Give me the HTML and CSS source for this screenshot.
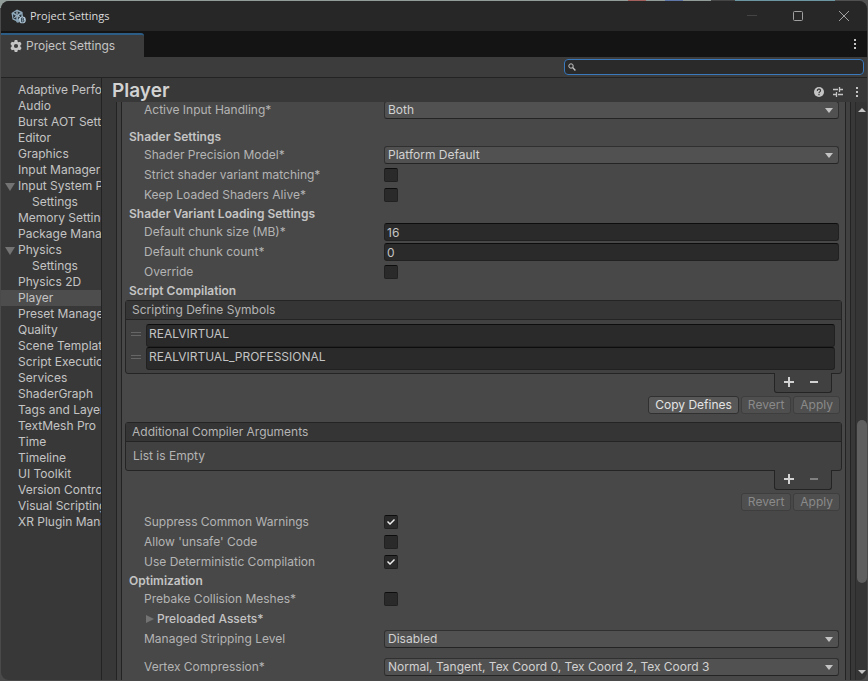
FILE: index.html
```html
<!DOCTYPE html>
<html lang="en">
<head>
    <meta charset="UTF-8">
    <meta name="viewport" content="width=device-width, initial-scale=1.0">
    <title>Project Settings</title>
    <link rel="stylesheet" href="styles.css">
</head>
<body>
    <div class="window">
        <header class="titlebar">
            <svg class="app-icon" width="15" height="15" viewBox="0 0 15 15">
                <path d="M6 0.5 L11.5 3 L12 8 L7 13 L1.5 10.5 L0.5 4 Z" fill="#8fa9bb"/>
                <path d="M6 2 L9.5 3.7 L6.2 5.5 L2.8 3.8 Z M2 5.2 L5.3 7 V10.8 L2.4 9.2 Z M7.2 7 L10.4 5.2 V8 L7.2 10.6 Z" fill="#26333d"/>
                <path d="M6 2.2 V5 M3.4 8.6 L5.4 7.3 M8.6 7.6 L7 6.8" stroke="#dce8f0" stroke-width="1"/>
                <circle cx="11.4" cy="10.9" r="3.4" fill="#b5cbd9"/>
                <path d="M10.4 9 h1.6 a1 1 0 0 1 0 1.9 h-1.6 M12 10.9 a1 1 0 0 1 0 2 h-1.6 V9" fill="none" stroke="#31424f" stroke-width="1"/>
                <circle cx="6.8" cy="12" r="1.7" fill="#88a2b4"/>
            </svg>
            <h1 class="window-title">Project Settings</h1>
            <div class="window-buttons">
                <button aria-label="Minimize"><svg width="12" height="12" viewBox="0 0 12 12"><path d="M1 5.5 H11" stroke="#444"/></svg></button>
                <button aria-label="Maximize"><svg width="12" height="12" viewBox="0 0 12 12"><rect x="1.5" y="1.5" width="9" height="9" rx="1" fill="none" stroke="#a0a0a0"/></svg></button>
                <button aria-label="Close"><svg width="12" height="12" viewBox="0 0 12 12"><path d="M1 1 L11 11 M11 1 L1 11" stroke="#a0a0a0"/></svg></button>
            </div>
        </header>

        <div class="dock">
            <button class="tab">
                <svg width="12" height="12" viewBox="0 0 12 12">
                    <path fill="#c4c4c4" fill-rule="evenodd" d="M4.7 0 H7.3 L7.7 1.7 L8.6 2.2 L10.2 1.7 L11.6 4 L10.4 5.2 V6.8 L11.6 8 L10.2 10.3 L8.6 9.8 L7.7 10.3 L7.3 12 H4.7 L4.3 10.3 L3.4 9.8 L1.8 10.3 L0.4 8 L1.6 6.8 V5.2 L0.4 4 L1.8 1.7 L3.4 2.2 L4.3 1.7 Z M6 3.9 A2.1 2.1 0 1 0 6 8.1 A2.1 2.1 0 1 0 6 3.9 Z"/>
                </svg>
                Project Settings
            </button>
            <button class="icon-button" aria-label="Tab menu"><svg width="4" height="12" viewBox="0 0 4 12"><path fill="#c4c4c4" d="M1 1h2v2H1z M1 5h2v2H1z M1 9h2v2H1z"/></svg></button>
        </div>

        <div class="toolbar">
            <label class="search">
                <svg width="8" height="8" viewBox="0 0 8 8"><circle cx="3" cy="3" r="2.2" fill="none" stroke="#c4c4c4"/><path d="M4.6 4.6 L7.4 7.4" stroke="#c4c4c4" stroke-width="1.4"/></svg>
                <input type="text" aria-label="Search settings">
            </label>
        </div>

        <div class="main">
            <nav class="sidebar">
                <a href="#">Adaptive Performance</a>
                <a href="#">Audio</a>
                <a href="#">Burst AOT Settings</a>
                <a href="#">Editor</a>
                <a href="#">Graphics</a>
                <a href="#">Input Manager</a>
                <a href="#" class="open">Input System Package</a>
                <a href="#" class="child">Settings</a>
                <a href="#">Memory Settings</a>
                <a href="#">Package Manager</a>
                <a href="#" class="open">Physics</a>
                <a href="#" class="child">Settings</a>
                <a href="#">Physics 2D</a>
                <a href="#" class="selected">Player</a>
                <a href="#">Preset Manager</a>
                <a href="#">Quality</a>
                <a href="#">Scene Template</a>
                <a href="#">Script Execution Order</a>
                <a href="#">Services</a>
                <a href="#">ShaderGraph</a>
                <a href="#">Tags and Layers</a>
                <a href="#">TextMesh Pro</a>
                <a href="#">Time</a>
                <a href="#">Timeline</a>
                <a href="#">UI Toolkit</a>
                <a href="#">Version Control</a>
                <a href="#">Visual Scripting</a>
                <a href="#">XR Plugin Management</a>
            </nav>

            <section class="content">
                <div class="content-header">
                    <h2>Player</h2>
                    <button class="icon-button" aria-label="Help"><svg width="10" height="10" viewBox="0 0 10 10"><circle cx="5" cy="5" r="5" fill="#c4c4c4"/><path d="M3.4 4 A1.6 1.5 0 1 1 5.6 5 Q5 5.3 5 6.2" fill="none" stroke="#383838" stroke-width="1.2"/><path d="M4.4 7h1.2v1.2H4.4z" fill="#383838"/></svg></button>
                    <button class="icon-button" aria-label="Presets"><svg width="10" height="10" viewBox="0 0 10 10"><path d="M0 2.5 H5 M7 2.5 H10 M6.5 0 V5 M0 7.5 H3 M5 7.5 H10 M3.5 5 V10" stroke="#c4c4c4" stroke-width="1.3"/></svg></button>
                    <button class="icon-button" aria-label="More"><svg width="4" height="12" viewBox="0 0 4 12"><path fill="#c4c4c4" d="M1 1h2v2H1z M1 5h2v2H1z M1 9h2v2H1z"/></svg></button>
                </div>

                <div class="scroll-area">
                    <div class="frame">
                        <div class="panel">
                            <div class="row">
                                <label for="input_handling">Active Input Handling*</label>
                                <div class="dropdown"><select id="input_handling"><option>Both</option></select></div>
                            </div>

                            <h3 class="spaced">Shader Settings</h3>
                            <div class="row">
                                <label for="shader_precision">Shader Precision Model*</label>
                                <div class="dropdown"><select id="shader_precision"><option>Platform Default</option></select></div>
                            </div>
                            <div class="row">
                                <label for="strict_variant">Strict shader variant matching*</label>
                                <input type="checkbox" id="strict_variant">
                            </div>
                            <div class="row">
                                <label for="keep_shaders">Keep Loaded Shaders Alive*</label>
                                <input type="checkbox" id="keep_shaders">
                            </div>

                            <h3>Shader Variant Loading Settings</h3>
                            <div class="row">
                                <label for="chunk_size">Default chunk size (MB)*</label>
                                <input type="text" id="chunk_size" value="16">
                            </div>
                            <div class="row">
                                <label for="chunk_count">Default chunk count*</label>
                                <input type="text" id="chunk_count" value="0">
                            </div>
                            <div class="row">
                                <label for="override">Override</label>
                                <input type="checkbox" id="override">
                            </div>

                            <h3>Script Compilation</h3>
                            <div class="list">
                                <div class="list-header">Scripting Define Symbols</div>
                                <div class="list-body">
                                    <div class="list-item"><span class="handle"></span><input type="text" aria-label="Symbol 1" value="REALVIRTUAL"></div>
                                    <div class="list-item"><span class="handle"></span><input type="text" aria-label="Symbol 2" value="REALVIRTUAL_PROFESSIONAL"></div>
                                </div>
                            </div>
                            <div class="list-footer">
                                <button aria-label="Add symbol"><svg width="10" height="10" viewBox="0 0 10 10"><path d="M0 5 H10 M5 0 V10" stroke="#d2d2d2" stroke-width="2"/></svg></button>
                                <button aria-label="Remove symbol"><svg width="10" height="10" viewBox="0 0 10 10"><path d="M1 5 H9" stroke="#d2d2d2" stroke-width="2"/></svg></button>
                            </div>
                            <div class="actions">
                                <button>Copy Defines</button>
                                <button disabled>Revert</button>
                                <button disabled>Apply</button>
                            </div>

                            <div class="list second">
                                <div class="list-header">Additional Compiler Arguments</div>
                                <div class="list-empty">List is Empty</div>
                            </div>
                            <div class="list-footer">
                                <button aria-label="Add argument"><svg width="10" height="10" viewBox="0 0 10 10"><path d="M0 5 H10 M5 0 V10" stroke="#d2d2d2" stroke-width="2"/></svg></button>
                                <button aria-label="Remove argument" disabled><svg width="10" height="10" viewBox="0 0 10 10"><path d="M1 5 H9" stroke="#808080" stroke-width="2"/></svg></button>
                            </div>
                            <div class="actions">
                                <button disabled>Revert</button>
                                <button disabled>Apply</button>
                            </div>

                            <div class="row">
                                <label for="suppress_warnings">Suppress Common Warnings</label>
                                <input type="checkbox" id="suppress_warnings" checked>
                            </div>
                            <div class="row">
                                <label for="unsafe_code">Allow 'unsafe' Code</label>
                                <input type="checkbox" id="unsafe_code">
                            </div>
                            <div class="row">
                                <label for="deterministic">Use Deterministic Compilation</label>
                                <input type="checkbox" id="deterministic" checked>
                            </div>

                            <h3>Optimization</h3>
                            <div class="row">
                                <label for="prebake">Prebake Collision Meshes*</label>
                                <input type="checkbox" id="prebake">
                            </div>
                            <div class="row">
                                <button class="foldout">Preloaded Assets*</button>
                            </div>
                            <div class="row">
                                <label for="stripping">Managed Stripping Level</label>
                                <div class="dropdown"><select id="stripping"><option>Disabled</option></select></div>
                            </div>
                            <div class="row spaced">
                                <label for="vertex">Vertex Compression*</label>
                                <div class="dropdown"><select id="vertex"><option>Normal, Tangent, Tex Coord 0, Tex Coord 2, Tex Coord 3</option></select></div>
                            </div>
                        </div>
                    </div>

                    <div class="scrollbar">
                        <span class="arrow-up"></span>
                        <span class="track-before"></span>
                        <span class="thumb"></span>
                        <span class="track-after"></span>
                        <span class="arrow-down"></span>
                    </div>
                </div>
            </section>
        </div>
    </div>
</body>
</html>
```
FILE: styles.css
```css
* { box-sizing: border-box; }
body { margin: 0; height: 100vh; padding: 1px; overflow: hidden; background: linear-gradient(90deg, #929d99 628px, #a3605c 628px 646px, #929d99 646px 665px, #5f76a8 665px 683px, #929d99 683px 711px, #454545 711px 735px, #6d96a3 735px 835px, #505050 835px) top / 100% 8px no-repeat #4a4a4a; font-family: Inter, sans-serif; font-size: 12px; line-height: 16px; color: #c4c4c4; }
button, input, select { font: inherit; color: inherit; margin: 0; }
button { padding: 0; border: none; background: none; }
a { color: inherit; text-decoration: none; }
svg { display: block; }

.window { height: 100%; display: flex; flex-direction: column; overflow: hidden; border-radius: 8px; background: #383838; }

.titlebar { height: 30px; flex: none; display: flex; align-items: center; padding-left: 10px; background: #272727; }
.window-title { flex: 1; margin: 0 0 0 4px; font-family: "Open Sans", "Noto Sans", sans-serif; font-size: 11px; font-weight: 400; color: #dcdcdc; }
.window-buttons { display: flex; }
.window-buttons button { width: 46px; height: 28px; display: flex; align-items: center; justify-content: center; }

.dock { height: 26px; flex: none; display: flex; align-items: flex-end; justify-content: space-between; padding-right: 4px; background: #141414; }
.tab { height: 24px; display: flex; align-items: center; gap: 4px; padding: 0 29px 0 9px; border-top: 2px solid #2c5d87; border-radius: 0 3px 0 0; background: #3c3c3c; }
.icon-button { width: 16px; display: flex; justify-content: center; }
.dock .icon-button { align-self: center; }

.toolbar { height: 21px; flex: none; display: flex; justify-content: flex-end; padding: 2px 3px; border-bottom: 1px solid #232323; background: #3c3c3c; }
.search { width: 300px; height: 16px; display: flex; align-items: center; padding-left: 4px; border-radius: 4px; background: #2a2a2a; outline: 1px solid #3a79bb; outline-offset: -1px; }
.search input { flex: 1; min-width: 0; height: 14px; border: none; outline: none; background: none; }

.main { flex: 1; min-height: 0; display: flex; }
.sidebar { width: 101px; flex: none; padding-top: 4px; overflow: hidden; border-right: 1px solid #232323; }
.sidebar a { display: block; position: relative; height: 16px; line-height: 16px; padding-left: 17px; white-space: nowrap; overflow: hidden; }
.sidebar .child { padding-left: 31px; }
.sidebar .selected { background: #4d4d4d; }
.sidebar .open::before { content: ""; position: absolute; left: 4px; top: 5px; border: solid transparent; border-width: 8px 5px 0; border-top-color: #737373; }

.content { flex: 1; min-width: 0; display: flex; flex-direction: column; }
.content-header { height: 24px; flex: none; display: flex; align-items: center; gap: 3px; padding: 3px 2px 0 10px; }
.content-header h2 { flex: 1; margin: 0; font-size: 19px; font-weight: 600; line-height: 20px; padding-bottom: 2px; color: #d2d2d2; }

.scroll-area { flex: 1; min-height: 0; display: flex; }
.frame { flex: 1; min-width: 0; margin: 0 4px 0 14px; padding: 0 4px; overflow: hidden; border: solid #232323; border-width: 0 1px; background: #414141; }
.panel { height: 100%; min-height: 578px; padding: 0 3px; overflow: hidden; border: solid #232323; border-width: 0 1px; background: #484848; }
.panel > :first-child { margin-top: -2px; }

.row { height: 20px; display: grid; grid-template-columns: 240px 1fr; align-items: center; padding: 0 3px 0 19px; }
.spaced { margin-top: 8px; }
.panel h3 { height: 17px; margin: 0 4px; font-size: 12px; font-weight: 600; line-height: 17px; }
.panel h3.spaced { margin-top: 8px; }
.row label { color: #b4b4b4; }

input[type="text"] { min-width: 0; outline: none; }
.row input[type="text"], .list-item input { width: 100%; height: 18px; padding: 0 2px; border: 1px solid #212121; border-top-color: #0d0d0d; border-radius: 3px; background: #2a2a2a; }
input[type="checkbox"] { appearance: none; width: 14px; height: 14px; border: 1px solid #212121; border-top-color: #0d0d0d; border-radius: 2px; background: #2a2a2a; }
input[type="checkbox"]:checked::after { content: ""; display: block; width: 12px; height: 12px; background: #eee; clip-path: polygon(2px 6px, 3px 5px, 5px 7px, 9px 3px, 10px 4px, 5px 9px); }

.dropdown { position: relative; }
.dropdown select { appearance: none; display: block; width: 100%; height: 18px; padding: 0 20px 0 3px; line-height: 16px; border: 1px solid #303030; border-bottom-color: #242424; border-radius: 3px; background: #515151; color: #d2d2d2; outline: none; }
.dropdown::after { content: ""; position: absolute; right: 6px; top: 7px; border: solid transparent; border-width: 5px 4px 0; border-top-color: #c4c4c4; pointer-events: none; }

.list { margin-top: 1px; border: 1px solid #242424; border-radius: 3px; background: #414141; color: #b4b4b4; }
.list.second { margin-top: 8px; }
.list-header { height: 19px; padding-left: 6px; line-height: 18px; border-bottom: 1px solid #242424; background: #353535; }
.list-body { padding: 4px 6px 3px 5px; }
.list-item { display: flex; align-items: flex-start; gap: 5px; }
.list-item input { flex: 1; height: 23px; padding-bottom: 4px; color: #c4c4c4; }
.handle { width: 10px; height: 4px; margin-top: 8px; border: solid #666; border-width: 1px 0; }
.list-empty { height: 28px; padding-left: 7px; line-height: 28px; }
.list-footer { position: relative; width: 58px; height: 20px; margin: -1px 10px 0 auto; display: flex; gap: 15px; align-items: center; padding: 0 9px 2px; border: 1px solid #242424; border-top: none; border-radius: 0 0 3px 3px; background: #414141; }

.actions { display: flex; justify-content: flex-end; gap: 2px; padding: 3px 2px 0; }
.actions button { height: 18px; padding: 0 6px; line-height: 16px; border: 1px solid #303030; border-radius: 3px; background: #585858; color: #e4e4e4; }
.actions button:disabled { border-color: #3e3e3e; background: #4f4f4f; color: #8a8a8a; }
.actions + .row { margin-top: 1px; }

.foldout { position: relative; padding-left: 13px; text-align: left; font-weight: 500; white-space: nowrap; }
.foldout::before { content: ""; position: absolute; left: 2px; top: 4px; border: solid transparent; border-width: 4px 0 4px 8px; border-left-color: #737373; }

.scrollbar { width: 12px; flex: none; display: flex; flex-direction: column; align-items: center; padding: 6px 0; border-left: 1px solid #2a2a2a; background: #353535; }
.arrow-up { margin-bottom: 6px; border: solid transparent; border-width: 0 4px 4px; border-bottom-color: #c4c4c4; }
.arrow-down { margin-top: 6px; border: solid transparent; border-width: 4px 4px 0; border-top-color: #c4c4c4; }
.track-before { flex: 302; }
.thumb { flex: 163; width: 10px; border-radius: 5px; background: #5f5f5f; }
.track-after { flex: 81; }
```
